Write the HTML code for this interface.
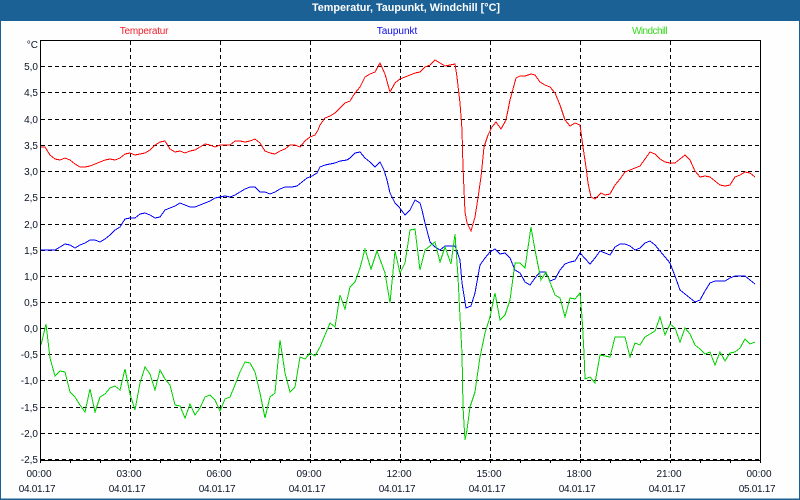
<!DOCTYPE html>
<html>
<head>
<meta charset="utf-8">
<style>
html,body{margin:0;padding:0;width:800px;height:500px;overflow:hidden;background:#fff}
svg{display:block}
text{font-family:"Liberation Sans",Arial,sans-serif;font-size:10px;fill:#0c1428}
</style>
</head>
<body>
<svg width="800" height="500" viewBox="0 0 800 500" xmlns="http://www.w3.org/2000/svg">
<rect x="0" y="0" width="800" height="500" fill="#1b6196"/>
<rect x="1" y="21" width="798" height="477.5" fill="#fdfefd"/>
<text x="406" y="11" text-anchor="middle" style="font-weight:bold;font-size:10.8px;fill:#fff">Temperatur, Taupunkt, Windchill [°C]</text>

<text x="144" y="34" text-anchor="middle" style="fill:#f0202c;letter-spacing:-0.2px">Temperatur</text>
<text x="397" y="34" text-anchor="middle" style="fill:#0a0ae8">Taupunkt</text>
<text x="649.500" y="34" text-anchor="middle" style="fill:#38d820;letter-spacing:-0.55px">Windchill</text>

<g stroke="#000" stroke-width="1" stroke-dasharray="4 3" shape-rendering="crispEdges" fill="none">
<path d="M41 66.500H760M41 92.500H760M41 119.500H760M41 145.500H760M41 171.500H760M41 197.500H760M41 224.500H760M41 250.500H760M41 276.500H760M41 302.500H760M41 328.500H760M41 354.500H760M41 380.500H760M41 407.500H760M41 433.500H760M41 459.500H760"/>
<path d="M130.500 41V460M220.500 41V460M310.500 41V460M400.500 41V460M490.500 41V460M580.500 41V460M670.500 41V460"/>
</g>

<polyline shape-rendering="crispEdges" fill="none" stroke="#ff0000" stroke-width="1" points="40,147 45,147 50,155 55,159 60,160 65,158 70,160 75,164 80,167 85,167 90,166 95,164 100,162 105,160 110,159 115,160 120,158 125,154 130,153 135,155 140,154 145,153 150,150 155,145 160,142 165,141 170,149 175,152 180,151 185,153 190,151 195,150 200,147 205,144 210,145 215,147 220,145 230,145 235,141 240,141 245,142 250,141 255,139 260,143 265,151 270,153 275,154 280,151 285,149 290,145 295,145 300,147 305,141 310,137 315,135 318,130 320,125 325,118 330,116 335,113 340,108 345,103 350,101 355,93 360,87 365,77 370,74 375,72 380,63 385,74 390,92 395,83 400,79 405,77 410,75 415,73 420,72 425,67 430,65 435,60 440,63 445,66 450,65 455,64 457,77 460,103 462,130 463,167 465,212 467,223 471,231 475,217 478,198 481,177 484,147 488,135 492,127 496,122 501,129 506,120 510,100 516,78 520,76 525,76 531,74 535,75 540,82 545,85 550,87 555,93 560,105 565,120 570,126 575,123 580,125 583,147 586,167 588,183 591,197 595,199 601,193 605,195 610,194 615,185 620,179 625,172 630,170 635,168 640,166 645,159 650,152 655,154 660,159 665,162 670,163 675,163 680,159 685,155 690,160 695,171 700,177 705,176 710,177 715,181 720,185 725,186 730,185 735,177 740,175 745,172 750,173 755,177"/>

<polyline shape-rendering="crispEdges" fill="none" stroke="#0000ff" stroke-width="1" points="40,250 55,250 60,247 65,244 70,245 75,248 80,245 85,243 90,240 95,240 100,242 105,239 110,235 115,230 120,227 125,219 130,218 135,218 140,214 145,213 150,215 155,218 160,217 165,210 170,208 175,206 180,203 185,205 190,207 195,207 200,205 205,203 210,201 215,198 220,197 225,196 230,197 235,195 240,192 245,189 250,187 255,187 260,192 265,192 270,194 275,192 280,189 285,187 292,187 297,186 302,182 307,178 312,176 317,173 320,167 325,165 330,164 335,163 340,161 347,160 350,158 355,153 360,152 365,158 370,162 375,167 380,162 384,170 387,180 390,193 395,203 399,207 405,215 410,210 415,200 420,203 422,210 425,223 430,242 435,247 440,250 445,246 455,246 460,260 462,283 466,308 471,306 475,293 480,265 485,258 490,252 495,249 500,254 505,253 510,258 515,270 520,273 525,282 530,285 535,278 540,272 545,272 550,281 555,279 560,270 565,264 570,262 575,261 580,253 590,264 595,258 600,251 605,253 610,255 615,247 620,244 625,244 630,246 635,250 640,248 645,243 650,241 655,245 660,251 665,257 670,263 675,276 680,290 685,294 690,298 695,302 700,300 705,291 710,283 715,281 725,281 730,278 735,276 745,276 750,280 755,284"/>

<polyline shape-rendering="crispEdges" fill="none" stroke="#00d200" stroke-width="1" points="41,345 46,324 50,358 55,376 60,371 65,372 70,392 75,397 80,405 85,412 90,389 95,412 100,397 105,394 110,388 115,386 120,390 125,369 130,394 135,410 140,383 145,367 150,374 155,390 160,370 165,379 170,385 175,405 180,406 185,418 190,404 195,415 200,408 205,397 210,395 215,400 220,411 225,399 230,397 235,385 240,372 245,362 250,363 255,372 260,393 265,418 270,397 275,393 280,340 285,373 290,392 295,387 300,357 305,359 310,353 315,356 320,347 325,335 330,323 335,327 340,295 345,309 350,287 355,282 360,268 365,249 371,269 377,251 385,273 390,303 395,251 400,273 405,263 410,230 415,229 420,270 425,250 435,242 440,262 445,247 451,264 455,234 458,277 460,317 462,353 463,407 465,440 467,430 470,407 475,392 480,357 485,333 490,317 495,293 500,320 505,315 510,300 515,263 520,263 525,268 531,227 535,250 541,280 546,272 555,295 560,298 565,317 570,298 575,299 580,293 582,317 584,353 585,379 590,377 595,383 600,355 605,356 610,357 615,337 625,337 630,357 635,343 640,345 645,337 650,334 655,331 660,317 665,335 670,324 675,328 680,342 685,328 690,334 695,345 700,349 705,354 710,352 715,365 720,352 725,361 730,353 735,352 740,348 745,339 750,344 755,342"/>

<g stroke="#000" stroke-width="1" shape-rendering="crispEdges" fill="none">
<rect x="40.500" y="40.500" width="720" height="420" stroke-width="1"/>
<path d="M40.500 40V461M760.500 40V461"/>
<path d="M70.500 460v3M100.500 460v3M130.500 460v3M160.500 460v3M190.500 460v3M220.500 460v3M250.500 460v3M280.500 460v3M310.500 460v3M340.500 460v3M370.500 460v3M400.500 460v3M430.500 460v3M460.500 460v3M490.500 460v3M520.500 460v3M550.500 460v3M580.500 460v3M610.500 460v3M640.500 460v3M670.500 460v3M700.500 460v3M730.500 460v3M40.500 460v3M760.500 460v3"/>
</g>

<g text-anchor="end">
<text x="38" y="48">°C</text>
<text x="38" y="70">5,0</text>
<text x="38" y="96">4,5</text>
<text x="38" y="123">4,0</text>
<text x="38" y="149">3,5</text>
<text x="38" y="175">3,0</text>
<text x="38" y="201">2,5</text>
<text x="38" y="228">2,0</text>
<text x="38" y="254">1,5</text>
<text x="38" y="280">1,0</text>
<text x="38" y="306">0,5</text>
<text x="38" y="332">0,0</text>
<text x="38" y="358">-0,5</text>
<text x="38" y="384">-1,0</text>
<text x="38" y="411">-1,5</text>
<text x="38" y="437">-2,0</text>
<text x="38" y="463">-2,5</text>
</g>

<g text-anchor="middle">
<text x="39" y="477">00:00</text>
<text x="129" y="477">03:00</text>
<text x="219" y="477">06:00</text>
<text x="309" y="477">09:00</text>
<text x="399" y="477">12:00</text>
<text x="489" y="477">15:00</text>
<text x="579" y="477">18:00</text>
<text x="669" y="477">21:00</text>
<text x="759" y="477">00:00</text>
</g>
<g text-anchor="middle" style="letter-spacing:-0.3px">
<text x="37" y="492">04.01.17</text>
<text x="127" y="492">04.01.17</text>
<text x="217" y="492">04.01.17</text>
<text x="307" y="492">04.01.17</text>
<text x="397" y="492">04.01.17</text>
<text x="487" y="492">04.01.17</text>
<text x="577" y="492">04.01.17</text>
<text x="667" y="492">04.01.17</text>
<text x="757" y="492">05.01.17</text>
</g>
</svg>
</body>
</html>
